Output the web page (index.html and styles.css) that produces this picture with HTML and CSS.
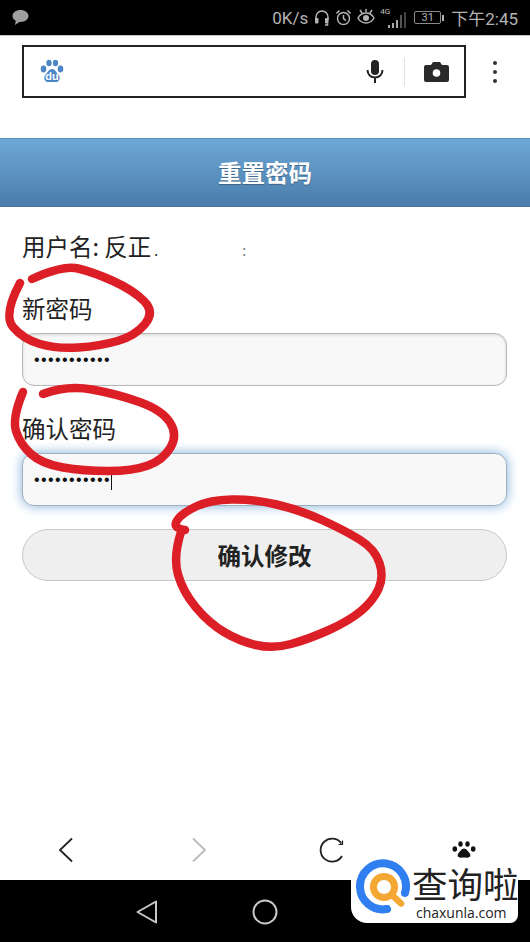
FILE: index.html
```html
<!DOCTYPE html>
<html lang="zh-CN">
<head>
    <meta charset="UTF-8">
    <meta name="viewport" content="width=device-width, initial-scale=1.0">
    <title>重置密码</title>
    <link rel="stylesheet" href="styles.css">
</head>
<body>
    <div class="page">
        <div class="status-bar">
            <svg class="bubble" width="17" height="17" viewBox="0 0 17 17"><path d="M8.500 1C4 1 .5 3.600.5 7c0 2 1.300 3.700 3.200 4.800L3 16l4.400-3.100h1.100c4.500 0 8-2.600 8-5.900S13 1 8.500 1z"/></svg>
            <div class="status-right">
                <span class="speed">0K/s</span>
                <svg class="ico" width="16" height="17" viewBox="0 0 16 17"><path d="M2 11V8a6 6 0 0 1 12 0v3M11 16h2.500v-1.500" fill="none"/><rect x="1" y="9" width="3.500" height="5.500" rx="1" class="solid"/><rect x="11" y="9" width="3.500" height="5.500" rx="1" class="solid"/></svg>
                <svg class="ico" width="17" height="17" viewBox="0 0 17 17"><circle cx="8.500" cy="9.500" r="6" fill="none"/><path d="M8.500 6v3.700l2.500 2M1.500 4.500l3-3M15.500 4.500l-3-3" fill="none"/></svg>
                <svg class="ico" width="18" height="17" viewBox="0 0 18 17"><path d="M1 9c2-3.500 5-5 8-5s6 1.500 8 5c-2 3.500-5 5-8 5s-6-1.500-8-5zM3 1l2 3M9 0v3M15 1l-2 3" fill="none"/><circle cx="9" cy="9" r="3" class="solid"/></svg>
                <div class="signal">
                    <span class="net">4G</span>
                    <span class="bar b1"></span><span class="bar b2"></span><span class="bar b3"></span><span class="bar b4"></span><span class="bar b5"></span>
                </div>
                <div class="battery"><span class="cell">31</span><span class="nub"></span></div>
                <span class="clock">下午2:45</span>
            </div>
        </div>

        <div class="toolbar">
            <div class="search-box">
                <svg class="baidu" width="24" height="26" viewBox="0 0 24 26">
                    <ellipse cx="3.500" cy="10" rx="2.800" ry="3.400"/>
                    <ellipse cx="9" cy="4" rx="2.600" ry="3.300"/>
                    <ellipse cx="15.500" cy="4" rx="2.600" ry="3.300"/>
                    <ellipse cx="20.500" cy="10" rx="2.800" ry="3.400"/>
                    <path d="M12 10c-3 0-4 3-6 5-2 2-2.500 5-.5 7 1.500 1.500 4 1 6.500 1s5 .5 6.500-1c2-2 1.500-5-.5-7-2-2-3-5-6-5z"/>
                    <text x="12" y="21" text-anchor="middle">du</text>
                </svg>
                <div class="search-tools">
                    <svg width="20" height="24" viewBox="0 0 20 24"><rect x="6" y="0" width="8" height="15" rx="4" fill="#222"/><path d="M2.500 10c0 4.500 3.300 7.500 7.500 7.500s7.500-3 7.500-7.500M10 17.500V23" fill="none" stroke="#222" stroke-width="2"/></svg>
                    <span class="divider"></span>
                    <svg width="25" height="20" viewBox="0 0 25 20"><path d="M2 3h5l2-3h7l2 3h5a2 2 0 0 1 2 2v13a2 2 0 0 1-2 2H2a2 2 0 0 1-2-2V5a2 2 0 0 1 2-2z" fill="#2a2a2a"/><circle cx="12.500" cy="11" r="3.800" fill="#fff"/></svg>
                </div>
            </div>
            <div class="kebab"><span></span><span></span><span></span></div>
        </div>

        <h1 class="title">重置密码</h1>

        <div class="form">
            <p class="user-line">用户名: 反正<span class="speck">.</span><span class="speck far">:</span></p>
            <p class="label first">新密码</p>
            <div class="field"><span class="dots">•••••••••••</span></div>
            <p class="label">确认密码</p>
            <div class="field focused"><span class="dots">•••••••••••</span><span class="caret"></span></div>
            <div class="submit">确认修改</div>
        </div>

        <div class="bottom-nav">
            <svg width="16" height="26" viewBox="0 0 16 26"><path d="M14 1.500L2 13l12 11.500" fill="none" stroke="#222" stroke-width="1.800"/></svg>
            <svg width="16" height="26" viewBox="0 0 16 26"><path d="M2 1.500L14 13 2 24.500" fill="none" stroke="#bbb" stroke-width="1.800"/></svg>
            <svg width="26" height="26" viewBox="0 0 26 26"><path d="M23.500 6.500A11.500 11.500 0 1 0 24 19" fill="none" stroke="#222" stroke-width="1.800"/><path d="M24.500 3.500v4h-4" fill="none" stroke="#222" stroke-width="1.200"/></svg>
            <svg width="24" height="18" viewBox="0 0 24 18" fill="#111"><ellipse cx="2.800" cy="8" rx="2.300" ry="2.700"/><ellipse cx="8.500" cy="3" rx="2.200" ry="2.800"/><ellipse cx="15.500" cy="3" rx="2.200" ry="2.800"/><ellipse cx="21.200" cy="8" rx="2.300" ry="2.700"/><path d="M12 7.500c-2.500 0-3.500 2.500-5 4-1.500 1.500-2 3.500-.5 4.500 1.500 1 3.500.5 5.500.5s4 .5 5.500-.5c1.500-1 1-3-.5-4.500-1.500-1.500-2.500-4-5-4z"/></svg>
        </div>

        <div class="system-nav">
            <svg width="24" height="26" viewBox="0 0 24 26"><path d="M21 2.500v21L2.500 13z" fill="none" stroke="#c8c8c8" stroke-width="2" stroke-linejoin="round"/></svg>
            <svg width="26" height="26" viewBox="0 0 26 26"><circle cx="13" cy="13" r="11.500" fill="none" stroke="#c8c8c8" stroke-width="2"/></svg>
        </div>

        <!-- red marker rings drawn over the screenshot -->
        <svg class="ink" width="530" height="942" viewBox="0 0 530 942">
            <path d="M20 283 Q3 315 13 327 Q23 339 40 344 Q57 349 78.500 347.500 Q100 346 117.500 341 Q135 336 145 324 Q155 312 144 301 Q133 290 113 281 Q93 272 78 268.500 Q63 265 32 279"/>
            <path d="M23 392 Q12 418 16 431 Q20 444 31 454 Q42 464 63 467.500 Q83 471 108 471 Q133 471 148 465.500 Q163 460 170.500 447.500 Q178 435 170 422.500 Q162 410 139.500 402 Q117 394 92 389.500 Q67 385 43 394"/>
            <path d="M181 532 Q173 557 178 574.500 Q183 592 196 607.500 Q209 623 224 632 Q239 641 256 645 Q273 649 291 644 Q309 639 329 630 Q349 621 361 611 Q373 601 378.500 589 Q384 577 379.500 563 Q375 549 359.500 539.500 Q344 530 322 520 Q300 510 276.500 504.500 Q253 499 231.500 499.500 Q210 500 196 506.500 Q182 513 177 520.500 Q172 528 185 530"/>
        </svg>

        <div class="watermark">
            <svg class="wm-logo" width="58" height="56" viewBox="0 0 58 56">
                <path d="M51 34A23 23 0 1 0 33 50" fill="none" stroke="#2f7ff0" stroke-width="8" stroke-linecap="round"/>
                <path d="M38 36l9 8.500" stroke="#f5a733" stroke-width="6.500" stroke-linecap="round"/>
                <circle cx="30" cy="28" r="10.500" fill="none" stroke="#f5a733" stroke-width="7"/>
            </svg>
            <div class="wm-text">
                <span class="wm-name">查询啦</span>
                <span class="wm-url">chaxunla.com</span>
            </div>
        </div>
    </div>
</body>
</html>
```

FILE: styles.css
```css
* {
    box-sizing: border-box;
}

body {
    margin: 0;
    background-color: #fff;
    font-family: "Noto Sans CJK SC", "Liberation Sans", sans-serif;
    color: #222;
}

.page {
    position: relative;
    width: 530px;
    height: 942px;
    overflow: hidden;
    display: flex;
    flex-direction: column;
}

/* status bar */
.status-bar {
    height: 36px;
    flex-shrink: 0;
    background-color: #000;
    border-bottom: 1px solid #c4c4c4;
    display: flex;
    align-items: center;
    justify-content: space-between;
    padding: 0 12px;
    color: #b4b4b4;
}

.bubble {
    fill: #a0a0a0;
}

.status-right {
    display: flex;
    align-items: center;
}

.speed {
    font-family: Roboto, sans-serif;
    font-size: 17px;
    margin-right: 6px;
}

.ico {
    margin-right: 5px;
    stroke: #b4b4b4;
    stroke-width: 1.5;
}

.ico .solid {
    fill: #b4b4b4;
    stroke: none;
}

.signal {
    position: relative;
    width: 26px;
    height: 20px;
    margin-right: 8px;
    display: flex;
    align-items: flex-end;
    justify-content: flex-end;
    gap: 1px;
}

.net {
    position: absolute;
    left: 0;
    top: -1px;
    font-family: Roboto, sans-serif;
    font-size: 8px;
    line-height: 9px;
    color: #c0c0c0;
}

.bar {
    width: 2px;
    margin-left: 1px;
    background-color: #a8a8a8;
}

.b1 { height: 3px; }
.b2 { height: 5px; }
.b3 { height: 8px; }
.b4 { height: 13px; background-color: #555; }
.b5 { height: 16px; background-color: #444; }

.battery {
    display: flex;
    align-items: center;
    margin-right: 7px;
}

.cell {
    width: 27px;
    height: 13px;
    border: 1px solid #8a8a8a;
    border-radius: 2px;
    font-family: Roboto, sans-serif;
    font-size: 11px;
    line-height: 11px;
    text-align: center;
}

.nub {
    width: 2px;
    height: 6px;
    margin-left: 1px;
    background-color: #b4b4b4;
}

.clock {
    font-family: Roboto, "Noto Sans CJK SC", sans-serif;
    font-size: 17px;
    white-space: nowrap;
}

/* browser search row */
.toolbar {
    flex-shrink: 0;
    padding: 9px 0 0 22px;
    display: flex;
    align-items: center;
}

.search-box {
    width: 444px;
    height: 53px;
    border: 2px solid #222;
    display: flex;
    align-items: center;
    justify-content: space-between;
    padding: 0 15px 0 16px;
}

.baidu {
    fill: #4c86c6;
}

.baidu text {
    fill: #fff;
    font-family: "Liberation Sans", sans-serif;
    font-size: 11px;
    font-weight: bold;
}

.search-tools {
    display: flex;
    align-items: center;
    gap: 19px;
}

.divider {
    width: 1px;
    height: 28px;
    background-color: #e2e2e2;
}

.kebab {
    margin-left: 27px;
    display: flex;
    flex-direction: column;
    gap: 5px;
}

.kebab span {
    width: 4px;
    height: 4px;
    border-radius: 50%;
    background-color: #333;
}

/* page header */
.title {
    margin: 40px 0 0;
    height: 69px;
    flex-shrink: 0;
    background: linear-gradient(#6ca8d6, #4b7cab);
    border-top: 1px solid #5a8db5;
    border-bottom: 1px solid #44749f;
    color: #fff;
    font-size: 23.5px;
    font-weight: bold;
    line-height: 67px;
    text-align: center;
    text-shadow: 0 1px 1px rgba(0, 0, 0, 0.3);
}

/* form */
.form {
    flex: 1;
    padding: 23px 23px 0 22px;
}

.form p {
    margin: 0;
    font-size: 23.5px;
    line-height: 32px;
}

.user-line {
    white-space: nowrap;
}

.speck {
    margin-left: 3px;
    font-size: 14px;
}

.far {
    margin-left: 84px;
    color: #777;
}

.form .label {
    margin-top: 26px;
}

.field {
    margin-top: 9px;
    height: 53px;
    background-color: #f8f8f8;
    border: 1px solid #b8b8b8;
    border-radius: 12px;
    box-shadow: inset 0 1px 3px rgba(0, 0, 0, 0.15);
    padding-left: 11px;
    display: flex;
    align-items: center;
}

.field.focused {
    border-color: #9fb2c4;
    box-shadow: 0 0 12px #7faed8;
}

.dots {
    font-family: "Liberation Sans", sans-serif;
    font-size: 16px;
    letter-spacing: 1.4px;
    line-height: 1;
    color: #111;
}

.caret {
    width: 1px;
    height: 20px;
    background-color: #111;
}

.submit {
    margin-top: 23px;
    height: 52px;
    background-color: #efefef;
    border: 1px solid #c8c8c8;
    border-radius: 26px;
    font-size: 23.5px;
    font-weight: bold;
    line-height: 50px;
    text-align: center;
}

/* browser bottom nav */
.bottom-nav {
    height: 60px;
    flex-shrink: 0;
    display: grid;
    grid-template-columns: repeat(4, 132.5px);
    align-items: center;
    justify-items: center;
}

.system-nav {
    height: 62px;
    flex-shrink: 0;
    background-color: #000;
    display: flex;
    align-items: center;
    padding: 2px 0 0 135px;
    gap: 93px;
}

/* overlays */
.ink {
    position: absolute;
    left: 0;
    top: 0;
    pointer-events: none;
}

.ink path {
    fill: none;
    stroke: #dc1f26;
    stroke-width: 8.5;
    stroke-linecap: round;
    stroke-linejoin: round;
}

.watermark {
    position: absolute;
    left: 351px;
    top: 858px;
    width: 167px;
    height: 65px;
    background-color: #fff;
    border-radius: 6px 6px 8px 16px;
    display: flex;
}

.wm-logo {
    flex-shrink: 0;
    margin-top: 1px;
    margin-left: 3px;
}

.wm-text {
    display: flex;
    flex-direction: column;
    align-items: center;
    padding-top: 3px;
    color: #222;
}

.wm-name {
    font-size: 35.5px;
    line-height: 44px;
    white-space: nowrap;
}

.wm-url {
    margin-right: 8px;
    font-family: "Open Sans", sans-serif;
    font-size: 14px;
    line-height: 15px;
    white-space: nowrap;
}
```
